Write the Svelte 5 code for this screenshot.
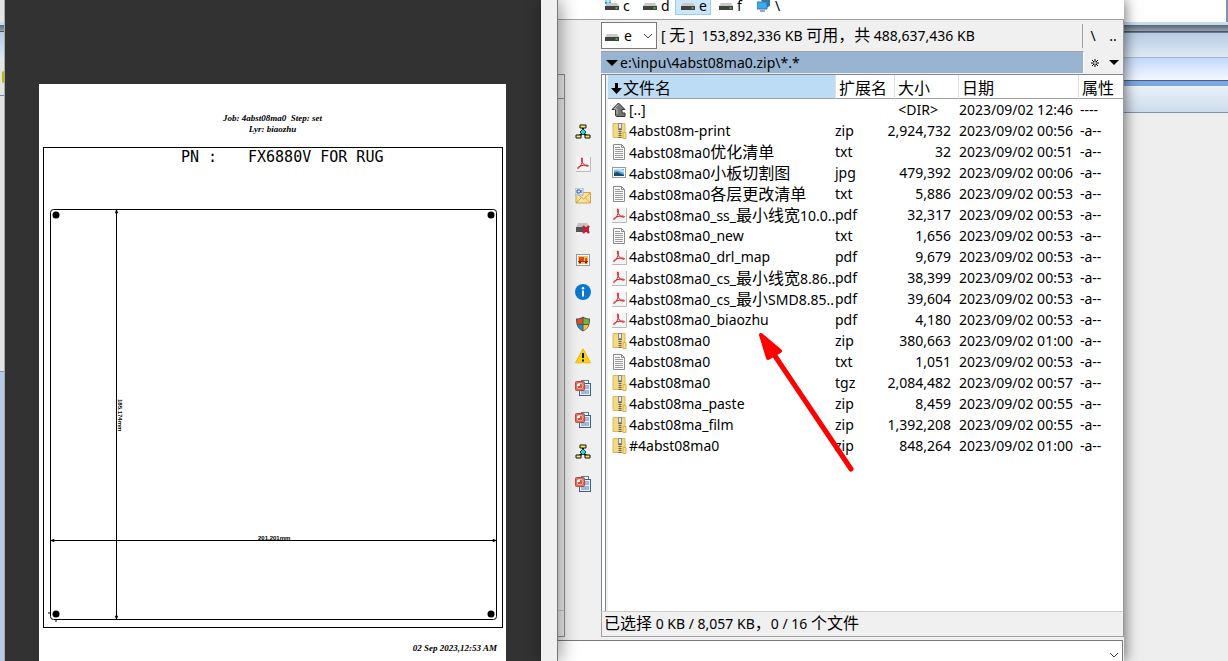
<script lang="ts">
  type Entry = { icon: string; name: string; ext: string; size: string; date: string; attr: string };

  const drives = ["c", "d", "e", "f", "\\"];
  const tools = ["tree", "pdf", "mail", "eject", "picture", "info", "shield", "warning", "slides", "slides", "tree", "slides"];

  const files: Entry[] = [
    { icon: "up", name: "[..]", ext: "", size: "<DIR>", date: "2023/09/02 12:46", attr: "----" },
    { icon: "zip", name: "4abst08m-print", ext: "zip", size: "2,924,732", date: "2023/09/02 00:56", attr: "-a--" },
    { icon: "txt", name: "4abst08ma0优化清单", ext: "txt", size: "32", date: "2023/09/02 00:51", attr: "-a--" },
    { icon: "jpg", name: "4abst08ma0小板切割图", ext: "jpg", size: "479,392", date: "2023/09/02 00:06", attr: "-a--" },
    { icon: "txt", name: "4abst08ma0各层更改清单", ext: "txt", size: "5,886", date: "2023/09/02 00:53", attr: "-a--" },
    { icon: "pdf", name: "4abst08ma0_ss_最小线宽10.0..", ext: "pdf", size: "32,317", date: "2023/09/02 00:53", attr: "-a--" },
    { icon: "txt", name: "4abst08ma0_new", ext: "txt", size: "1,656", date: "2023/09/02 00:53", attr: "-a--" },
    { icon: "pdf", name: "4abst08ma0_drl_map", ext: "pdf", size: "9,679", date: "2023/09/02 00:53", attr: "-a--" },
    { icon: "pdf", name: "4abst08ma0_cs_最小线宽8.86..", ext: "pdf", size: "38,399", date: "2023/09/02 00:53", attr: "-a--" },
    { icon: "pdf", name: "4abst08ma0_cs_最小SMD8.85..", ext: "pdf", size: "39,604", date: "2023/09/02 00:53", attr: "-a--" },
    { icon: "pdf", name: "4abst08ma0_biaozhu", ext: "pdf", size: "4,180", date: "2023/09/02 00:53", attr: "-a--" },
    { icon: "zip", name: "4abst08ma0", ext: "zip", size: "380,663", date: "2023/09/02 01:00", attr: "-a--" },
    { icon: "txt", name: "4abst08ma0", ext: "txt", size: "1,051", date: "2023/09/02 00:53", attr: "-a--" },
    { icon: "zip", name: "4abst08ma0", ext: "tgz", size: "2,084,482", date: "2023/09/02 00:57", attr: "-a--" },
    { icon: "zip", name: "4abst08ma_paste", ext: "zip", size: "8,459", date: "2023/09/02 00:55", attr: "-a--" },
    { icon: "zip", name: "4abst08ma_film", ext: "zip", size: "1,392,208", date: "2023/09/02 00:55", attr: "-a--" },
    { icon: "zip", name: "#4abst08ma0", ext: "zip", size: "848,264", date: "2023/09/02 01:00", attr: "-a--" },
  ];

  let drive = $state("e");
  let command = $state("");

  // odd parts are the Chinese runs
  function runs(text: string) {
    return text.split(/([\u3000-\u9fff\uff00-\uffef]+)/);
  }
</script>

{#snippet mixed(text: string)}
  {#each runs(text) as part, i}<span class:cjk={i % 2 === 1}>{part}</span>{/each}
{/snippet}

{#snippet icon(name: string)}
  <svg class="icon" viewBox="0 0 16 16" aria-hidden="true">
    {#if name === "up"}
      <path d="M7.5 1L14 7.5h-3v3.5h3v3.5H5.5l-1-1v-6H1z" fill="#777" stroke="#333" />
      <path d="M7.5 2.5L3 7h3v5" fill="none" stroke="#bbb" />
    {:else if name === "zip"}
      <path d="M2 .5h12v14H2z" fill="#f3d983" stroke="#dcb959" />
      <path d="M8 1h2v13H8z" fill="#e5c261" />
      <rect x="7" y="0" width="4" height="7" fill="#8d8d8d" />
      <rect x="8" y="1" width="2" height="4" fill="#e9e9e9" />
      <path d="M9 6v9" stroke="#666" stroke-width="3" stroke-dasharray="1 1" />
      <path d="M12 9.500h3v6h-3z" fill="#f8e08e" stroke="#d7b04a" />
    {:else if name === "txt"}
      <path d="M2.500 .5h8l3 3v12h-11z" fill="#fbfbfb" stroke="#8b8b8b" />
      <path d="M10.500 .5v3h3" fill="none" stroke="#8b8b8b" />
      <path d="M4 3.500h5M4 5.500h8M4 7.500h8M4 9.500h8M4 11.500h8M4 13.500h8" stroke="#999" />
    {:else if name === "jpg"}
      <rect x="1.500" y="2.500" width="13" height="10" fill="#fff" stroke="#999" />
      <rect x="3" y="4" width="10" height="7" fill="#5ba5e0" />
      <path d="M3 6c3-1 4 0 10 2V5c-4-2-7-1-10-1z" fill="#b9dcf5" />
      <path d="M3 8l3-1 7 3v1H3z" fill="#1d4f61" />
    {:else if name === "pdf"}
      <path d="M1 .5h14v15H1z" fill="#f5f3f3" />
      <path d="M1 15.500h14.500V1" fill="none" stroke="#bbb" />
      <path d="M6.500 2c1.500-.5 1 2.500.5 4.500C6.300 9 4.500 12 2.800 12.500c-1.300-.5 1.700-2.500 4.200-3 2.500-.6 5.500-.8 6.500.2.300 1-3.500.5-5-1.500C7 6.500 6 3.500 6.500 2z" fill="none" stroke="#cf202a" />
    {:else if name === "tree"}
      <path d="M8 4v5M8 9l-4 3M8 9l4 3" stroke="#111" stroke-width="2" />
      <path d="M5 1h6v3H5zM1 11h5v3H1zM10 11h5v3h-5z" fill="#f3ee5d" stroke="#111" />
      <path d="M8 5l3 3-3 3-3-3z" fill="#36d3cf" stroke="#164e50" />
    {:else if name === "mail"}
      <path d="M1 4.500h14.500v10.500H1z" fill="#fae29a" stroke="#cfa144" />
      <path d="M1 15l5-5M15.500 15l-5-5M1 5l7.500 6 7-6" fill="none" stroke="#cfa144" />
      <rect x="0" y="0" width="8" height="7" fill="#e5edf8" stroke="#9bb0d1" />
      <path d="M2 5V2h2c2 0 2 3 0 3zM6 2v3" fill="none" stroke="#2855a5" />
    {:else if name === "eject"}
      <path d="M3 3h9l2 3v2H1z" fill="#c4c4c4" />
      <path d="M1 7h13v5H1z" fill="#555" />
      <path d="M8 6l6 7M14 6l-6 7" stroke="#cf1d38" stroke-width="2.500" />
    {:else if name === "picture"}
      <rect x="1.500" y="2.500" width="13" height="11" fill="#fff" stroke="#999" />
      <rect x="3" y="4" width="10" height="8" fill="#f9bd5c" />
      <path d="M4 5h5v4H4zM10 6h2v3h-2z" fill="#dd4a1c" />
      <path d="M3 9h10v1H3z" fill="#a8330f" />
      <circle cx="5" cy="10.500" r="1" fill="#222" /><circle cx="11" cy="10.500" r="1" fill="#222" />
    {:else if name === "info"}
      <circle cx="8" cy="8" r="8" fill="#0878d1" />
      <circle cx="8" cy="4.300" r="1.200" fill="#fff" />
      <path d="M8 6.500v6" stroke="#fff" stroke-width="2" />
    {:else if name === "shield"}
      <path d="M8 .5C6 2 4 2.500 1 2.500c0 6 1 10 7 13 6-3 7-7 7-13C12 2.500 10 2 8 .5z" fill="#555" />
      <path d="M7.500 2C6 3 4.500 3.400 2.200 3.500V8h5.300z" fill="#dc4e24" />
      <path d="M8.500 2c1.500 1 3 1.400 5.300 1.500V8H8.500z" fill="#75b63b" />
      <path d="M7.500 9H2.500c.7 2.500 2 4 5 5.500z" fill="#2f8ad6" />
      <path d="M8.500 9h5c-.7 2.500-2 4-5 5.500z" fill="#f5c52d" />
    {:else if name === "warning"}
      <path d="M8 .8l7.500 14H.5z" fill="#ffd21a" stroke="#f3b600" stroke-linejoin="round" />
      <path d="M8 5v5M8 11.500v2" stroke="#111" stroke-width="2" />
    {:else if name === "slides"}
      <rect x="6.500" y=".5" width="7" height="11" fill="#fff" stroke="#5579a8" />
      <rect x="4.500" y="3.500" width="11" height="12" fill="#e9f1fa" stroke="#395f91" />
      <path d="M10 6h4M10 8h4M6 11h8M6 13h8" stroke="#5881b5" />
      <rect x=".5" y="1.500" width="9" height="9" rx="1" fill="#e0715d" stroke="#c04a38" />
      <circle cx="5" cy="6" r="3" fill="#fff" />
      <path d="M5 6V3.500a2.500 2.500 0 1 1-2.500 2.500z" fill="#d9533d" />
    {/if}
  </svg>
{/snippet}

{#snippet disk(letter: string)}
  <svg class="disk" viewBox="0 0 14 14" aria-hidden="true">
    {#if letter === "\\"}
      <path d="M4 2l9-2v8l-4 2z" fill="#41749c" />
      <path d="M0 4h10v7H0z" fill="#3fa9ee" stroke="#277ab8" />
      <path d="M3 13h5" stroke="#9ab" stroke-width="2" />
    {:else}
      {#if letter === "c"}
        <path d="M0 0h2.500v2.500H0zM3.500 0H6v2.500H3.500zM0 3.500h2.500V6H0zM3.500 3.500H6V6H3.500z" fill="#1aa7ec" />
      {/if}
      <path d="M2 5h10l2 3H0z" fill="#c9c9c9" />
      <path d="M0 8h14v4H0z" fill="#414141" />
      <path d="M10.500 10h2" stroke="#4fdc55" stroke-width="1.500" />
    {/if}
  </svg>
{/snippet}

<main>
  <div class="sliver">
    <div class="frame-edge"></div>
    <div class="ribbon"></div>
    <div class="marker"></div>
    <div class="gap"></div>
    <div class="tint"></div>
  </div>

  <section class="viewer">
    <article class="sheet">
      <header>
        <p>Job: 4abst08ma0&nbsp; Step: set</p>
        <p>Lyr: biaozhu</p>
      </header>
      <svg class="drawing" viewBox="0 0 467 482" fill="none" stroke="#000">
        <rect x="4.500" y=".5" width="459" height="480" />
        <rect x="11.500" y="62.500" width="446" height="410" rx="3" />
        <path d="M77.500 62v410M11 393.500h447" />
        <path d="M77.500 63l-1 3h2zM77.500 472l-1-3h2zM12 393.500l3-1v2zM457 393.500l-3-1v2z" />
        <path d="M9 466h2M17 473v2" />
        <g fill="#000" stroke="none">
          <circle cx="17" cy="68" r="3.500" />
          <circle cx="452" cy="68" r="3.500" />
          <circle cx="17" cy="467" r="3.500" />
          <circle cx="452" cy="467" r="3.500" />
          <text class="plot" x="142" y="15">PN :</text>
          <text class="plot" x="209" y="15">FX6880V FOR RUG</text>
          <text class="dim" x="219" y="393">201.201mm</text>
          <text class="dim" transform="translate(79 252) rotate(90)">185.174mm</text>
        </g>
      </svg>
      <footer>02 Sep 2023,12:53 AM</footer>
    </article>
  </section>

  <div class="viewer-scroll"></div>

  <section class="commander">
    <nav class="drives">
      {#each drives as d}
        <button class:active={d === drive} onclick={() => (drive = d)}>
          {@render disk(d)}<span>{d}</span>
        </button>
      {/each}
    </nav>

    <div class="panes">
      <div class="other-pane"><div></div></div>

      <div class="tools">
        {#each tools as tool}
          <button aria-label={tool}>{@render icon(tool)}</button>
        {/each}
      </div>

      <div class="panel">
        <div class="info">
          <div class="drive-select">
            {@render disk("e")}
            <select aria-label="drive" bind:value={drive}>
              {#each drives as d}<option value={d}>{d}</option>{/each}
            </select>
            <svg class="chevron" viewBox="0 0 10 6"><path d="M1 1l4 4 4-4" fill="none" stroke="#444" /></svg>
          </div>
          <p class="label">{@render mixed("[ 无 ]")}</p>
          <p class="space">{@render mixed("153,892,336 KB 可用，共 488,637,436 KB")}</p>
          <div class="jump">
            <button>\</button>
            <button>..</button>
          </div>
        </div>

        <div class="path-row">
          <div class="path">
            <svg viewBox="0 0 12 6" aria-hidden="true"><path d="M0 0h12L6 6z" /></svg>
            <span>e:\inpu\4abst08ma0.zip\*.*</span>
          </div>
          <button aria-label="favorites">
            <svg viewBox="0 0 8 8" width="8"><path d="M4 0v8M0 4h8M1 1l6 6M7 1l-6 6" stroke="#000" /><circle cx="4" cy="4" r="1" fill="#fff" /></svg>
          </button>
          <button aria-label="history">
            <svg viewBox="0 0 10 5" width="10"><path d="M0 0h10L5 5z" /></svg>
          </button>
        </div>

        <div class="list">
          <table>
            <colgroup>
              <col />
              <col class="c-ext" />
              <col class="c-size" />
              <col class="c-date" />
              <col class="c-attr" />
            </colgroup>
            <thead>
              <tr>
                <th class="sorted">
                  <svg viewBox="0 0 11 11" width="11" aria-hidden="true"><path d="M4 0h3v5h4l-5.500 6L0 5h4z" /></svg>文件名
                </th>
                <th>扩展名</th>
                <th>大小</th>
                <th>日期</th>
                <th>属性</th>
              </tr>
            </thead>
            <tbody>
              {#each files as file}
                <tr>
                  <td class="name"><div>{@render icon(file.icon)}<span>{@render mixed(file.name)}</span></div></td>
                  <td>{file.ext}</td>
                  <td class="size" class:dir={file.icon === "up"}><div>{file.size}</div></td>
                  <td class="date">{file.date}</td>
                  <td class="attr">{file.attr}</td>
                </tr>
              {/each}
            </tbody>
          </table>
          <svg class="arrow" viewBox="0 0 96 140" aria-hidden="true">
            <path d="M14 20L92 136" stroke="#f00" stroke-width="5" stroke-linecap="round" />
            <path d="M2 2l19 16-12 7z" fill="#f00" stroke="#f00" stroke-width="4" stroke-linejoin="round" />
          </svg>
        </div>

        <div class="status">{@render mixed("已选择 0 KB / 8,057 KB，0 / 16 个文件")}</div>
      </div>
    </div>

    <div class="command">
      <input aria-label="command" bind:value={command} />
      <button aria-label="command history">
        <svg class="chevron" viewBox="0 0 10 6"><path d="M1 1l4 4 4-4" fill="none" stroke="#444" /></svg>
      </button>
    </div>
  </section>

  <aside class="backdrop">
    <div class="blank"></div>
    <div class="frame-edge"></div>
    <div class="ribbon"></div>
    <div class="tabs"></div>
    <div class="bar"></div>
  </aside>
</main>

<style>
  :global(body) {
    margin: 0;
    background: #eee;
  }

  main {
    display: grid;
    grid-template-columns: 5px minmax(0, 536fr) 17px minmax(0, 566fr) minmax(0, 104fr);
    min-height: 100vh;
    overflow: hidden;
    font-family: "Noto Sans", "Noto Sans CJK SC", sans-serif;
    font-size: 14px;
    color: #000;
  }

  p {
    margin: 0;
  }

  button {
    display: flex;
    align-items: center;
    justify-content: center;
    padding: 0;
    border: none;
    background: none;
    font: inherit;
    color: inherit;
  }

  svg {
    flex: none;
  }

  .cjk {
    font-family: "Noto Sans CJK SC", sans-serif;
    font-size: 16px;
  }

  .frame-edge {
    height: 6px;
    border-top: 3px solid #c9dcf0;
    border-bottom: 1px solid #435770;
    background: linear-gradient(#54677f, #9b9fa3);
  }

  .ribbon {
    height: 24px;
    border-bottom: 1px solid #a3b7c9;
    background: linear-gradient(#b6cbe4, #dfe9f4);
  }

  /* window behind, left side */
  .sliver {
    display: flex;
    flex-direction: column;
    padding-top: 22px;
    background: #e4e4e4;
    border-right: 1px solid #aaa;
    box-sizing: border-box;
  }

  .sliver .ribbon {
    height: 29px;
    border-bottom: none;
  }

  .marker {
    height: 12px;
    margin: 10px 0 0 2px;
    border-radius: 6px 0 0 6px;
    background: #b5b900;
  }

  .gap {
    height: 275px;
    margin-top: 12px;
    border-top: 1px solid #7788a5;
    border-bottom: 1px solid #8a9ab5;
  }

  .tint {
    flex: 1;
    background: #b9cae6;
  }

  /* pdf viewer */
  .viewer {
    display: flex;
    padding: 84px 35px 0 34px;
    background: #323232;
  }

  .sheet {
    flex: 1;
    min-width: 0;
    background: #fff;
    font: italic bold 9px/11px "Liberation Serif", serif;
  }

  .sheet header {
    padding: 29px 0 12px;
    text-align: center;
  }

  .sheet footer {
    padding: 14px 9px 4px 0;
    text-align: right;
  }

  .drawing {
    display: block;
    width: 100%;
  }

  .plot {
    font: normal 15px "DejaVu Sans Mono", monospace;
  }

  .dim {
    font: bold 6px "Liberation Sans", sans-serif;
  }

  .viewer-scroll {
    z-index: 1;
    background: #f0f0f0;
    border-right: 1px solid #777;
    box-shadow: 2px 0 18px rgba(0, 0, 0, 0.45);
  }

  /* file manager */
  .commander {
    display: flex;
    flex-direction: column;
    background: #f0f0f0;
    box-shadow: 2px 0 12px rgba(0, 0, 0, 0.5);
    z-index: 0;
  }

  .drives {
    display: flex;
    align-items: flex-end;
    gap: 2px;
    height: 15px;
    padding: 0 0 4px 41px;
    border-bottom: 1px solid #a0a0a0;
    background: #fff;
    overflow: hidden;
  }

  .drives button {
    width: 36px;
    height: 20px;
    padding-left: 5px;
    box-sizing: border-box;
    border: 1px solid transparent;
    justify-content: flex-start;
    gap: 4px;
  }

  .drives button.active {
    border-color: #99cdf5;
    background: #cce6fb;
  }

  .disk {
    width: 14px;
    height: 14px;
  }

  .panes {
    display: grid;
    grid-template-columns: 7px 36px minmax(0, 1fr);
    flex: 1;
    padding-bottom: 3px;
  }

  .other-pane {
    display: flex;
    margin-top: 54px;
    border: 1px solid #8f8f8f;
    border-left: none;
    padding: 23px 0 25px;
  }

  .other-pane div {
    flex: 1;
    border-top: 1px solid #8f8f8f;
    border-bottom: 1px solid #ccc;
  }

  .tools {
    padding-top: 96px;
  }

  .tools button {
    width: 100%;
    height: 32px;
  }

  .icon {
    width: 16px;
    height: 16px;
  }

  .panel {
    display: flex;
    flex-direction: column;
    border-right: 1px solid #999;
  }

  .info {
    display: flex;
    align-items: center;
    height: 31px;
    white-space: nowrap;
  }

  .info p {
    padding-bottom: 4px;
  }

  .drive-select {
    display: flex;
    align-items: center;
    width: 54px;
    height: 25px;
    border: 1px solid #7a7a7a;
    background: #fff;
  }

  .drive-select .disk {
    margin-left: 3px;
  }

  .drive-select select {
    flex: 1;
    min-width: 0;
    padding: 0 0 0 5px;
    border: none;
    appearance: none;
    background: none;
    font: inherit;
    color: inherit;
  }

  .chevron {
    width: 10px;
    height: 6px;
    margin-right: 3px;
  }

  .info .label {
    padding-left: 4px;
    padding-right: 8px;
  }

  .space {
    flex: 1;
    min-width: 0;
    overflow: hidden;
  }

  .jump {
    display: flex;
    height: 24px;
    border-left: 1px solid #a0a0a0;
  }

  .jump button {
    width: 20px;
  }

  .path-row {
    display: flex;
    height: 23px;
  }

  .path-row button {
    width: 19px;
  }

  .path {
    display: flex;
    flex: 1;
    align-items: center;
    gap: 2px;
    height: 21px;
    padding-left: 5px;
    margin-right: 1px;
    border-top: 1px solid #a0a0a0;
    border-right: 1px solid #fff;
    background: #99b4d1;
  }

  .path svg {
    width: 12px;
  }

  .list {
    position: relative;
    flex: 1;
    padding-left: 6px;
    border-top: 1px solid #828790;
    border-left: 1px solid #828790;
    background: linear-gradient(90deg, #fff 3px, #828790 3px 4px, #f0f0f0 4px 6px, #fff 6px);
  }

  table {
    width: 100%;
    table-layout: fixed;
    border-collapse: separate;
    border-spacing: 0;
  }

  .c-ext {
    width: 59px;
  }

  .c-size {
    width: 64px;
  }

  .c-date {
    width: 120px;
  }

  .c-attr {
    width: 45px;
  }

  th {
    height: 24px;
    padding: 0 0 0 3px;
    box-sizing: border-box;
    border-bottom: 1px solid #a0a0a0;
    border-left: 1px solid #e0e0e0;
    font-family: "Noto Sans CJK SC", sans-serif;
    font-size: 16px;
    line-height: 22px;
    font-weight: normal;
    text-align: left;
    white-space: nowrap;
  }

  th.sorted {
    padding-left: 3px;
    border-left: none;
    background: #bbdcf4;
  }

  th svg {
    margin-right: 1px;
  }

  td {
    height: 21px;
    padding: 0;
    line-height: 21px;
    white-space: nowrap;
  }

  .name div {
    display: flex;
    align-items: center;
    gap: 2px;
    height: 21px;
    padding-left: 3px;
  }

  .name .cjk {
    line-height: 20px;
  }

  /* long sizes spill to the left, over the empty end of the ext column */
  .size div {
    display: flex;
    justify-content: flex-end;
    padding-right: 7px;
  }

  .size.dir div {
    padding-right: 20px;
  }

  .date {
    padding-left: 1px;
  }

  .attr {
    padding-left: 2px;
  }

  /* pointer drawn over the list */
  .arrow {
    position: absolute;
    top: 258px;
    left: 157px;
    width: 96px;
    height: 140px;
    pointer-events: none;
  }

  .status {
    height: 24px;
    padding-left: 2px;
    border: 1px solid #a0a0a0;
    border-top-color: #ccc;
    border-right: none;
    line-height: 20px;
    white-space: nowrap;
  }

  .command {
    display: flex;
    height: 20px;
    margin-right: 1px;
    border: 1px solid #7a7a7a;
    border-bottom: none;
    border-left: none;
    background: #fff;
  }

  .command input {
    flex: 1;
    min-width: 0;
    padding: 0 4px;
    border: none;
    outline: none;
    background: none;
    font: inherit;
  }

  .command button {
    padding-top: 8px;
  }

  /* window behind, right side */
  .backdrop {
    background: #eee;
  }

  .blank {
    height: 22px;
    margin-right: 2px;
    background: #fff;
    box-shadow: 2px 0 #7b93b5;
  }

  .backdrop .ribbon {
    border-top: 1px solid #64778d;
  }

  .tabs {
    height: 22px;
    border-bottom: 1px solid #44608c;
    background: linear-gradient(#c3d8fb, #f4f8ff);
  }

  .bar {
    height: 26px;
    border-top: 5px solid #7ea5dd;
    border-bottom: 1px solid #7f93a9;
    background: linear-gradient(#eaf2fa, #cddceb);
  }
</style>
